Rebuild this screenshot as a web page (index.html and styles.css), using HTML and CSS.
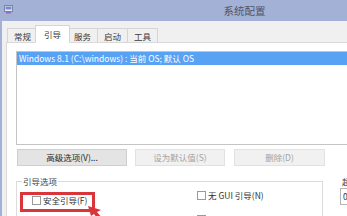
FILE: index.html
```html
<!DOCTYPE html>
<html>
<head>
<meta charset="utf-8">
<link rel="stylesheet" href="styles.css">
</head>
<body>
<div class="window">
  <div class="titlebar">
    <svg class="appicon" width="9" height="9" viewBox="0 0 9 9">
      <rect x="0.5" y="0.5" width="8" height="6" fill="#e8ecf4" stroke="#7a849c"/>
      <rect x="1.5" y="1.5" width="6" height="3" fill="#6f8fd0"/>
      <rect x="2" y="7" width="5" height="1.5" fill="#8a6fb8"/>
    </svg>
    <div class="title">系统配置</div>
    <div></div>
  </div>
  <div class="client">
    <div class="tabs">
      <div class="tab">常规</div>
      <div class="tab active">引导</div>
      <div class="tab">服务</div>
      <div class="tab">启动</div>
      <div class="tab">工具</div>
    </div>
    <div class="panel">
      <div class="listbox">
        <div class="row selected">Windows 8.1 (C:\windows) : 当前 OS; 默认 OS</div>
      </div>
      <div class="buttons">
        <div class="btn b1">高级选项(V)...</div>
        <div class="btn b2 disabled">设为默认值(S)</div>
        <div class="btn b3 disabled">删除(D)</div>
      </div>
      <div class="lower">
        <fieldset class="group">
          <legend>引导选项</legend>
          <div class="opts">
            <div class="opt left"><span class="cb"></span>安全引导(F)</div>
            <div class="opt"><span class="cb"></span>无 GUI 引导(N)</div>
            <div class="opt"></div>
            <div class="opt"><span class="cb"></span></div>
          </div>
        </fieldset>
        <div class="timeout">
          <div class="tlabel">超时(T):</div>
          <div class="tinput">0</div>
        </div>
      </div>
      <div class="mark"></div>
      <svg class="arrow" width="14" height="12" viewBox="0 0 14 12">
        <polygon points="0,0 13,4 9,6 14,12 9,12 6,8 3,10" fill="#d8363a"/>
      </svg>
    </div>
  </div>
</div>
</body>
</html>
```

FILE: styles.css
```css
* { box-sizing: border-box; }
html, body {
  margin: 0;
  padding: 0;
  width: 347px;
  height: 216px;
  overflow: hidden;
  background: #f0f0f0;
}
.window {
  width: 489px;
  height: 216px;
  border-left: 2px solid #a3b1d7;
  background: #f0f0f0;
  font-family: "Noto Sans CJK SC", "Noto Sans", sans-serif;
  font-size: 8.5px;
  line-height: 11px;
  color: #333;
}
.titlebar {
  height: 21px;
  background: #a3b1d7;
  display: grid;
  grid-template-columns: 1fr auto 1fr;
  align-items: center;
  margin-left: -2px;
}
.appicon {
  margin-left: 4px;
  margin-top: -2px;
}
.title {
  font-size: 10.5px;
  color: #4e5466;
}
.client {
  padding-top: 5px;
}
.tabs {
  display: flex;
  align-items: flex-end;
  padding-left: 5px;
  height: 17px;
  margin-bottom: -1px;
}
.tab {
  height: 15px;
  padding: 2px 6px 0;
  border: 1px solid #d5d5d5;
  border-right: none;
  border-bottom: 1px solid #d9d9d9;
  background: #f0f0f0;
  color: #3a3a3a;
}
.tab:nth-child(5) { border-right: 1px solid #d5d5d5; }
.tab.active {
  height: 18px;
  padding: 3px 8px 0;
  margin: 0 -2px;
  background: #fff;
  border: 1px solid #d5d5d5;
  border-bottom: 1px solid #fff;
  position: relative;
  z-index: 1;
}
.tab.active + .tab { border-left: none; }
.panel {
  position: relative;
  margin-left: 4px;
  height: 200px;
  background: #fff;
  border: 1px solid #d9d9d9;
  padding: 8px 0 0 9px;
}
.listbox {
  height: 94px;
  width: 500px;
  border: 1px solid #c4c4c4;
  background: #fff;
}
.row.selected {
  height: 13px;
  padding-left: 2px;
  padding-top: 1px;
  background: #58a2f4;
  color: #fff;
  white-space: nowrap;
}
.buttons {
  display: flex;
  margin-top: 4px;
  margin-left: 1px;
}
.btn {
  height: 17px;
  display: flex;
  align-items: center;
  justify-content: center;
  background: #e4e4e4;
  border: 1px solid #cfcfcf;
  color: #2a2a2a;
  white-space: nowrap;
}
.b1 { width: 110px; }
.b2 { width: 90px; margin-left: 8px; }
.b3 { width: 91px; margin-left: 9px; }
.btn.disabled {
  background: #f1f1f1;
  border-color: #e2e2e2;
  color: #a3a3a3;
}
.lower {
  display: flex;
  margin-top: 10px;
}
.group {
  width: 307px;
  height: 110px;
  margin: 0;
  padding: 0 0 0 15px;
  min-width: 0;
  border: 1px solid #dcdcdc;
}
.group legend {
  padding: 0 1px;
  margin-left: -10px;
  color: #444;
}
.opts {
  display: grid;
  grid-template-columns: 165px auto;
  align-items: start;
  row-gap: 8px;
  padding-top: 3px;
}
.opt {
  display: flex;
  align-items: center;
  height: 11px;
  white-space: nowrap;
  color: #333;
}
.opt.left { margin-top: 5px; }
.cb {
  width: 9px;
  height: 9px;
  border: 1px solid #9a9a9a;
  background: #fff;
  margin-right: 2px;
  flex: none;
}
.timeout {
  margin-left: 17px;
}
.tlabel {
  margin-left: 2px;
  white-space: nowrap;
  color: #444;
}
.tinput {
  margin-top: 1px;
  width: 40px;
  height: 17px;
  border: 1px solid #b5b5b5;
  padding-left: 2px;
  line-height: 15px;
}
.mark {
  position: absolute;
  left: 13px;
  top: 149px;
  width: 75px;
  height: 20px;
  border: 3px solid #d8363a;
}
.arrow {
  position: absolute;
  left: 81px;
  top: 163px;
}
```
